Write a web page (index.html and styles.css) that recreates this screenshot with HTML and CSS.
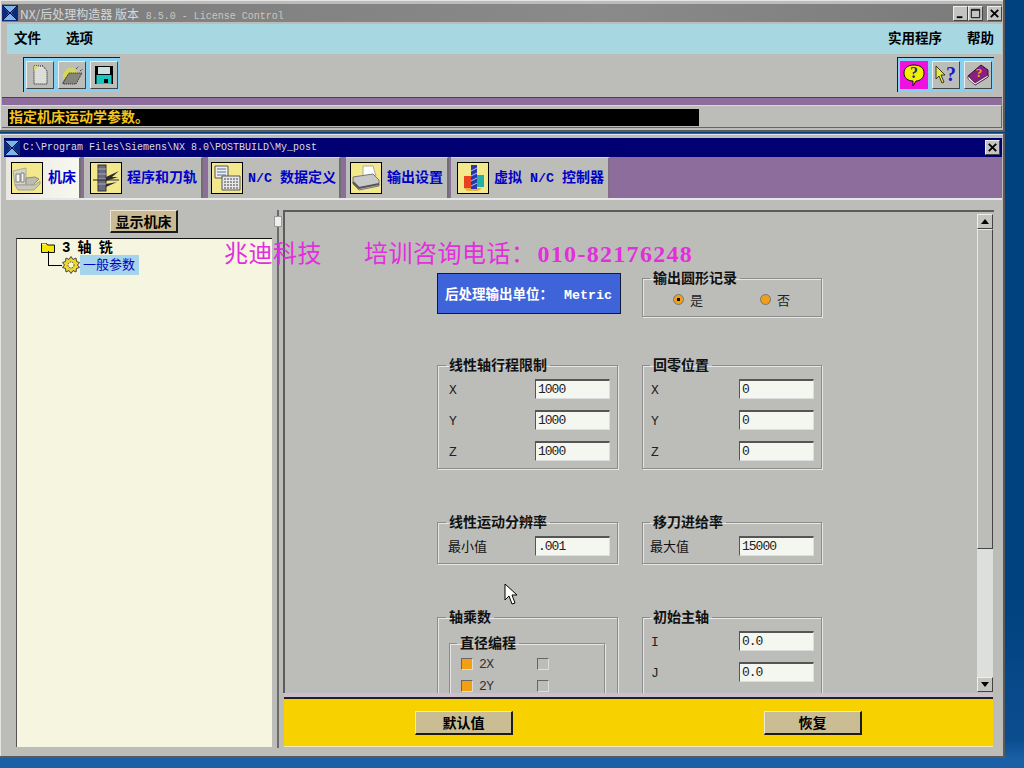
FILE: index.html
```html
<!DOCTYPE html>
<html lang="zh">
<head>
<meta charset="utf-8">
<title>NX/后处理构造器</title>
<link rel="stylesheet" href="styles.css">
</head>
<body>
<div class="desk">
  <section class="win win-top">
    <header class="title title-grey">
      <svg class="logo" viewBox="0 0 16 16"><rect width="16" height="16" fill="#0a2a80"/><path d="M1 1h14L9 8l6 7H1l6-7z" fill="#7fb4e8"/><path d="M1 1l7 7 7-7M1 15l7-7 7 7" stroke="#061040" fill="none"/></svg>
      <span class="title-text">NX/后处理构造器 版本 <span class="mono">8.5.0 - License Control</span></span>
      <div class="wbtns">
        <span class="wbtn"><svg viewBox="0 0 14 14"><rect x="3" y="10" width="6" height="2" fill="#000"/></svg></span>
        <span class="wbtn"><svg viewBox="0 0 14 14"><path d="M2.500 2.500h9v9h-9zM2.500 3.500h9" fill="none" stroke="#000"/></svg></span>
        <span class="wbtn wbtn-gap"><svg viewBox="0 0 14 14"><path d="M3 3l8 8M11 3l-8 8" stroke="#000" stroke-width="2"/></svg></span>
      </div>
    </header>
    <nav class="menu">
      <span class="menu-item">文件</span>
      <span class="menu-item">选项</span>
      <span class="spacer"></span>
      <span class="menu-item">实用程序</span>
      <span class="menu-item">帮助</span>
    </nav>
    <div class="toolbar">
      <div class="tgroup">
        <span class="tbtn"><svg viewBox="0 0 24 24"><path d="M6 3h9l4 5v13H6z" fill="#dcdcd8" stroke="#111" stroke-dasharray="1 1"/><path d="M6 3h5L6 8z" fill="#d8d870"/></svg></span>
        <span class="tbtn"><svg viewBox="0 0 24 24"><path d="M3 10l5-4h6l3 4 5 0-6 11H3z" fill="#85857c"/><path d="M3 10l5-5h6l4 5-9 0-6 8z" fill="#d4d860"/><path d="M3 20L9 10h13l-6 11H3z" fill="none" stroke="#222" stroke-dasharray="1 1"/><path d="M16 6l3-3M20 8l3-2" stroke="#222" stroke-dasharray="1 1"/></svg></span>
        <span class="tbtn"><svg viewBox="0 0 24 24"><path d="M3 3h18v18H3z" fill="#000"/><rect x="6" y="4" width="12" height="7" fill="#c8e0e0"/><rect x="4.500" y="12" width="15" height="9" fill="#18c8c0"/><rect x="12" y="16" width="4" height="4" fill="#000"/></svg></span>
      </div>
      <span class="spacer"></span>
      <div class="tgroup">
        <span class="tbtn tbtn-pink"><svg viewBox="0 0 24 24"><path d="M12 2c6 0 10 3 10 8s-4 8-8 8l-3 5v-5C6 18 2 15 2 10s4-8 10-8z" fill="#f0f000" stroke="#111"/><text x="12" y="15" text-anchor="middle" class="svg-q">?</text></svg></span>
        <span class="tbtn"><svg viewBox="0 0 24 24"><path d="M2 3l9 9-4 0 3 7-2 1-3-7-3 3z" fill="#e8e840" stroke="#111" stroke-width=".8"/><text x="17" y="18" text-anchor="middle" class="svg-q svg-q-blue">?</text></svg></span>
        <span class="tbtn"><svg viewBox="0 0 24 24"><path d="M2 13L15 2l7 5v7L9 22z" fill="#8a1f82" stroke="#301030"/><path d="M2 13l7 7 13-8v2L9 22l-7-6z" fill="#f0f0f0" stroke="#301030" stroke-width=".6"/><text x="13" y="14" text-anchor="middle" class="svg-q svg-q-gold">?</text></svg></span>
      </div>
    </div>
    <div class="stripe"></div>
    <div class="status">
      <div class="status-msg">指定机床运动学参数。</div>
    </div>
  </section>

  <section class="win win-main">
    <header class="title title-navy">
      <svg class="logo" viewBox="0 0 16 16"><rect width="16" height="16" fill="#0a2a80"/><path d="M1 1h14L9 8l6 7H1l6-7z" fill="#7fb4e8"/><path d="M1 1l7 7 7-7M1 15l7-7 7 7" stroke="#061040" fill="none"/></svg>
      <span class="title-path mono">C:\Program Files\Siemens\NX 8.0\POSTBUILD\My_post</span>
      <span class="wbtn wbtn-solo"><svg viewBox="0 0 14 14"><path d="M3 3l8 8M11 3l-8 8" stroke="#000" stroke-width="2"/></svg></span>
    </header>

    <div class="tabs">
      <div class="tab tab-active tab-1">
        <span class="tab-ico"><svg viewBox="0 0 30 30"><path d="M1 8l13-3v17H3z" fill="#d4d4cc" stroke="#a8a8a0"/><path d="M4 11h4v8H4zM9 10h3v9H9z" fill="#f4f4f0" stroke="#808078"/><path d="M14 15l9-1 4 2-6 6-7 1z" fill="#bcbcb0" stroke="#8c8c80"/><path d="M3 22h20l5-4v3l-6 6H6z" fill="#c8c8bc" stroke="#a0a094"/></svg></span>
        <span class="tab-label">机床</span>
      </div>
      <div class="tab tab-2">
        <span class="tab-ico"><svg viewBox="0 0 30 30"><rect x="7" y="2" width="8" height="26" fill="#6a6a80" stroke="#333"/><path d="M7 6h8M7 11h8M7 16h8M7 21h8" stroke="#a8a8c0"/><path d="M15 14l13-6-7 6h6l-12 4zM15 21l11-2-11 5z" fill="#2c2c2c"/><path d="M2 17h26" stroke="#222"/></svg></span>
        <span class="tab-label">程序和刀轨</span>
      </div>
      <div class="tab tab-3">
        <span class="tab-ico"><svg viewBox="0 0 30 30"><path d="M3 3h13v12H3z" fill="#eee" stroke="#555"/><path d="M5 6h9M5 9h9M5 12h9" stroke="#5070a0"/><path d="M10 13h18v14H10z" fill="#e8e8e8" stroke="#555"/><path d="M12 16h14M12 19h14M12 22h14M12 25h14" stroke="#404040" stroke-dasharray="2 1"/></svg></span>
        <span class="tab-label"><span class="mono-b">N/C </span>数据定义</span>
      </div>
      <div class="tab tab-4">
        <span class="tab-ico"><svg viewBox="0 0 30 30"><path d="M12 3h10l3 10H12z" fill="#fff" stroke="#aaa"/><path d="M2 14l20-3 6 6v6l-20 4-6-6z" fill="#c8c8c8" stroke="#777"/><path d="M2 19l6 6 20-4" fill="none" stroke="#555" stroke-width="2"/></svg></span>
        <span class="tab-label">输出设置</span>
      </div>
      <div class="tab tab-5">
        <span class="tab-ico"><svg viewBox="0 0 30 30"><path d="M6 13h10v12H6z" fill="#e84020"/><path d="M18 12h8v12h-8z" fill="#20b0a8"/><path d="M6 25h18l-4 3H9z" fill="#e8b040"/><rect x="13" y="2" width="6" height="24" fill="#2838a8"/><path d="M13 8l6-3M13 13l6-3M13 18l6-3M13 23l6-3" stroke="#b0c0f0"/></svg></span>
        <span class="tab-label">虚拟<span class="mono-b"> N/C </span>控制器</span>
      </div>
      <div class="tabs-rest"></div>
    </div>

    <div class="body">
      <aside class="left">
        <button class="btn btn-show" type="button">显示机床</button>
        <div class="tree">
          <div class="tree-root">
            <svg class="folder" viewBox="0 0 14 12"><path d="M.5 2.500h5l1 1.500h7v7.500H.5z" fill="#f4e800" stroke="#111"/><path d="M1 3h4" stroke="#fff"/></svg>
            <span class="tree-root-text"><span class="mono-k">3</span> 轴 铣</span>
          </div>
          <div class="tree-leaf">
            <span class="elbow"></span>
            <svg class="gear" viewBox="0 0 18 18"><path d="M9 .5l2 3 3-1.500.5 3.500 3 1-2 2.500 2 2.500-3 1-.5 3.500-3-1.500-2 3-2-3-3 1.500-.5-3.500-3-1 2-2.500-2-2.500 3-1 .5-3.500 3 1.500z" fill="#ecd830" stroke="#444"/><circle cx="9" cy="9" r="3" fill="#fff8c0" stroke="#444" stroke-dasharray="1.500 1"/></svg>
            <span class="tree-sel">一般参数</span>
          </div>
        </div>
      </aside>

      <div class="sash"><span class="sash-handle"></span></div>

      <div class="right">
        <div class="pane">
          <div class="scroll">
            <div class="form">
              <div class="row row-1">
                <div class="units">后处理输出单位：<span class="mono-w">Metric</span></div>
                <fieldset class="group group-r group-radio">
                  <legend>输出圆形记录</legend>
                  <div class="radios">
                    <label class="radio"><span class="dot dot-on"></span>是</label>
                    <label class="radio"><span class="dot"></span>否</label>
                  </div>
                </fieldset>
              </div>
              <div class="row row-2">
                <fieldset class="group">
                  <legend>线性轴行程限制</legend>
                  <div class="fld"><span>X</span><input class="inp" value="1000" readonly></div>
                  <div class="fld"><span>Y</span><input class="inp" value="1000" readonly></div>
                  <div class="fld"><span>Z</span><input class="inp" value="1000" readonly></div>
                </fieldset>
                <fieldset class="group group-r">
                  <legend>回零位置</legend>
                  <div class="fld"><span>X</span><input class="inp" value="0" readonly></div>
                  <div class="fld"><span>Y</span><input class="inp" value="0" readonly></div>
                  <div class="fld"><span>Z</span><input class="inp" value="0" readonly></div>
                </fieldset>
              </div>
              <div class="row row-3">
                <fieldset class="group">
                  <legend>线性运动分辨率</legend>
                  <div class="fld"><span class="cjk">最小值</span><input class="inp" value=".001" readonly></div>
                </fieldset>
                <fieldset class="group group-r">
                  <legend>移刀进给率</legend>
                  <div class="fld"><span class="cjk">最大值</span><input class="inp" value="15000" readonly></div>
                </fieldset>
              </div>
              <div class="row row-4">
                <fieldset class="group group-tall">
                  <legend>轴乘数</legend>
                  <fieldset class="group group-inner">
                    <legend>直径编程</legend>
                    <div class="chk-row"><span class="chk chk-on"></span><span class="chk-text">2X</span><span class="chk"></span></div>
                    <div class="chk-row"><span class="chk chk-on"></span><span class="chk-text">2Y</span><span class="chk"></span></div>
                  </fieldset>
                </fieldset>
                <fieldset class="group group-r group-tall">
                  <legend>初始主轴</legend>
                  <div class="fld"><span>I</span><input class="inp" value="0.0" readonly></div>
                  <div class="fld"><span>J</span><input class="inp" value="0.0" readonly></div>
                </fieldset>
              </div>
            </div>
          </div>
          <div class="vbar">
            <span class="vbtn"><i class="arrow-up"></i></span>
            <span class="thumb"></span>
            <span class="trough"></span>
            <span class="vbtn"><i class="arrow-down"></i></span>
          </div>
        </div>
        <div class="pane-gap"></div>
        <div class="actions">
          <button class="btn btn-act" type="button">默认值</button>
          <button class="btn btn-act" type="button">恢复</button>
        </div>
      </div>
    </div>
  </section>

  <div class="watermark"><span>兆迪科技</span><span>培训咨询电话：<b>010-82176248</b></span></div>
  <svg class="cursor" viewBox="0 0 14 24"><path d="M1 1v16l4-4 3 8 3-1-3-8h5z" fill="#fff" stroke="#000"/></svg>
</div>
</body>
</html>
```
FILE: styles.css
```css
* { box-sizing: border-box; }
html, body { margin: 0; padding: 0; }
body { width: 1024px; height: 768px; overflow: hidden; font-family: "Noto Sans CJK SC", sans-serif; }
.desk {
  position: relative; width: 1024px; height: 768px; overflow: hidden;
  background: linear-gradient(#00427f 0, #00427f 600px, #0b4e90 740px, #1b5fa6 760px, #1b5fa6 100%);
  display: flex; flex-direction: column; gap: 1px;
}
.spacer { flex: 1; }
.mono { font-family: "Liberation Mono", monospace; }
.mono-b { font-family: "Liberation Mono", monospace; font-weight: 700; white-space: pre; }
.mono-k { font-family: "Liberation Mono", monospace; font-weight: 700; }
.mono-w { font-family: "Liberation Mono", monospace; font-weight: 700; font-size: 13.300px; margin-left: 11px; }

.win {
  width: 1005px; background: #bcbdb9;
  border-right: 2px solid #5a5a5a; border-bottom: 2px solid #5a5a5a;
  display: flex; flex-direction: column;
  box-shadow: inset 1px 1px 0 #e4e4e4;
}
.win-top { height: 132px; padding: 4px 1px 0 2px; }
.win-main { height: 625px; padding: 4px 1px 0 5px; border-top: 1px solid #5a5a5a; }

.title { height: 18px; flex: none; display: flex; align-items: center; }
.title-grey { background: linear-gradient(90deg, #7c7c7c, #8a8a8a 60%, #7a7a7a); }
.title-navy { height: 19px; background: #000072; margin-left: -1px; }
.logo { width: 16px; height: 16px; flex: none; margin-right: 2px; }
.title-text { font-size: 12px; color: #d8d8d8; white-space: pre; }
.title-text .mono { font-size: 10px; color: #c8c8c0; letter-spacing: 0; margin-left: 4px; }
.title-path { font-size: 10px; color: #dcdcdc; letter-spacing: 0; margin-left: 1px; }
.wbtns { margin-left: auto; display: flex; padding-right: 0; }
.wbtn {
  width: 15px; height: 15px; display: block; background: #c4c4c0;
  border: 1px solid; border-color: #eee #444 #444 #eee;
}
.wbtn svg { display: block; width: 13px; height: 13px; }
.wbtn-gap { margin-left: 4px; }
.wbtn-solo { margin-left: auto; margin-right: 2px; }

.menu {
  height: 30px; flex: none; margin: 2px 0 0 5px; background: #a7d7e1;
  display: flex; align-items: center; padding: 0 8px 4px 7px; gap: 25px;
  font-size: 13.500px; font-weight: 700; color: #000;
}
.toolbar { height: 43px; flex: none; display: flex; align-items: flex-start; padding: 3px 8px 0 21px; }
.tgroup {
  display: flex; gap: 4px; padding: 3px 2px 3px 2px; height: 35px;
  background: #88d0f0; border: 1px solid #10203a; border-width: 1px 0 0 1px;
}
.tbtn {
  width: 28px; height: 28px; background: #bcbdb9; display: flex; align-items: center; justify-content: center;
  border: 1px solid; border-color: #eee #444 #444 #eee;
}
.tbtn svg { width: 24px; height: 24px; }
.tbtn-pink { background: #f010e0; border-color: #f010e0; }
.svg-q { font: 700 16px "Liberation Serif", serif; fill: #203080; }
.svg-q-blue { font-size: 20px; fill: #1818d0; }
.svg-q-gold { font-size: 13px; fill: #f0a020; }
.stripe { height: 8px; flex: none; background: #8c6d9c; border-top: 1px solid #444; }
.status {
  height: 23px; flex: none; padding: 3px 0 0 6px;
  border-top: 1px solid #d8d8d8; border-bottom: 1px solid #666; border-right: 1px solid #666;
}
.status-msg {
  width: 691px; height: 17px; background: #000; color: #f2c41e;
  font-size: 14px; font-weight: 700; line-height: 15px; padding-left: 1px; white-space: nowrap;
}

.tabs { height: 43px; flex: none; display: flex; align-items: stretch; background: #8c6d9c; margin-left: 1px; border-bottom: 2px solid #e8e8e8; }
.tab {
  display: flex; align-items: center; gap: 5px; background: #bcbdb9;
  border-right: 2px solid #707070; border-top: 1px solid #d8d8d8;
}
.tab-active { background: linear-gradient(90deg, #e8e8e0, #f8f8f0); }
.tab-1 { width: 75px; padding-left: 5px; margin-right: 3px; }
.tab-2 { width: 119px; padding-left: 6px; margin-right: 5px; }
.tab-3 { width: 133px; padding-left: 3px; margin-right: 5px; }
.tab-4 { width: 103px; padding-left: 4px; margin-right: 2px; }
.tab-5 { width: 159px; padding-left: 6px; border-right-color: #807088; }
.tabs-rest { flex: 1; }
.tab-ico { width: 32px; height: 32px; flex: none; background: #f4e88c; border: 1px solid #000; }
.tab-ico svg { width: 30px; height: 30px; display: block; }
.tab-label { color: #0000c8; font-size: 14px; font-weight: 700; white-space: pre; padding-bottom: 4px; }
.tab-label .mono-b { font-size: 13.300px; }

.body { flex: 1; min-height: 0; display: flex; padding-top: 10px; }
.left { width: 267px; flex: none; display: flex; flex-direction: column; padding-left: 11px; }
.btn {
  font-family: "Noto Sans CJK SC", sans-serif; font-size: 14px; font-weight: 700; color: #000; padding: 0;
  background: #c8bb94; border: 1px solid; border-color: #efe9d6 #1c1c1c #1c1c1c #efe9d6; border-width: 1px 2px 2px 1px;
}
.btn-show { width: 68px; height: 23px; margin-left: 94px; line-height: 16px; }
.tree {
  width: 256px; height: 509px; margin-top: 5px; background: #f6f6e0;
  border-top: 1px solid #111; border-left: 1px solid #555;
  padding: 1px 0 0 24px; position: relative; font-size: 14px; font-weight: 700;
}
.tree-root { display: flex; align-items: center; gap: 7px; height: 14px; }
.folder { width: 14px; height: 12px; }
.tree-root-text { white-space: pre; word-spacing: 4px; line-height: 14px; }
.tree-leaf { display: flex; align-items: center; height: 20px; margin-top: 1px; margin-left: 7px; }
.elbow { width: 14px; height: 15px; border-left: 1px solid #000; border-bottom: 1px solid #000; margin-top: -14px; flex: none; }
.gear { width: 18px; height: 18px; flex: none; }
.tree-sel { background: #a6d4ea; color: #0000c0; font-weight: 400; padding: 0 4px 0 3px; height: 20px; line-height: 18px; font-size: 13px; }

.sash { width: 11px; flex: none; display: flex; justify-content: center; position: relative; margin-bottom: 8px; }
.sash::before { content: ""; width: 2px; background: #6a6a6a; margin-left: 1px; }
.sash-handle { position: absolute; left: 2px; top: 6px; width: 8px; height: 11px; background: #eee; border: 1px solid #999; }

.right { flex: 1; min-width: 0; display: flex; flex-direction: column; margin-right: 8px; margin-bottom: 8px; }
.pane {
  height: 483px; flex: none; display: flex; overflow: hidden;
  border-top: 2px solid #5c5c5c; border-left: 2px solid #5c5c5c;
}
.scroll { flex: 1; min-width: 0; overflow: hidden; padding: 58px 0 0 152px; }
.form { width: 386px; display: flex; flex-direction: column; }
.row { display: flex; gap: 24px; align-items: flex-start; }
.row-1 { height: 87px; }
.row-2 { height: 157px; }
.row-3 { height: 95px; }
.row-4 { height: 120px; }

.units {
  width: 184px; height: 41px; margin-top: 3px; margin-right: -3px; flex: none; background: #3f63d9; color: #fff;
  border: 1px solid #10183a; font-size: 13.500px; font-weight: 700; line-height: 38px; padding-left: 7px; white-space: pre;
}
.group {
  width: 181px; margin: 0; padding: 6px 7px 0 11px; min-width: 0; flex: none;
  border: 1px solid #8c8c8c; box-shadow: 1px 1px 0 #e6e6e6, inset 1px 1px 0 #e6e6e6;
}
.group-r { width: 180px; padding-left: 8px; }
.group legend {
  font-size: 14px; font-weight: 700; line-height: 14px; height: 16px; padding: 0 3px; margin-left: -3px; color: #111;
}
.group-r legend { margin-left: -1px; }
.row-2 .group { height: 112px; }
.row-3 .group { height: 50px; }
.group-radio { height: 47px; }
.group-tall { height: 140px; }
.fld { display: flex; align-items: center; justify-content: space-between; height: 20px; margin-bottom: 11px; font: 13px "Liberation Mono", monospace; color: #222; }
.fld span { font-size: 13px; padding-top: 3px; }
.fld .cjk { font: 13px/18px "Noto Sans CJK SC", sans-serif; color: #111; margin-left: -1px; padding-top: 0; }
.inp {
  width: 75px; height: 20px; padding: 0 0 0 2px; font: 13px "Liberation Mono", monospace; letter-spacing: -1px; color: #222;
  background: #f4f6f0; border: 1px solid; border-color: #555 #ddd #ddd #555; border-width: 2px 1px 1px 1px; outline: none;
}
.radios { display: flex; padding-left: 22px; gap: 57px; }
.radio { display: flex; align-items: center; gap: 6px; font-size: 13px; line-height: 15px; color: #222; }
.dot { width: 11px; height: 11px; border-radius: 50%; background: #f0a018; border: 1px solid #777; display: block; }
.dot-on { background: radial-gradient(circle, #111 0 1.500px, #f0a018 2px); }
.group-inner { width: 156px; height: 80px; padding: 2px 0 0 11px; margin-top: 4px; }
.group .group-inner legend { margin-left: -4px; }
.chk-row { display: flex; align-items: center; height: 22px; font: 13px "Liberation Mono", monospace; letter-spacing: -.5px; color: #333; }
.chk { width: 12px; height: 12px; flex: none; border: 1px solid; border-color: #666 #ddd #ddd #666; }
.chk-on { background: #f0a012; }
.chk-text { width: 64px; padding-left: 6px; }

.vbar { width: 16px; flex: none; margin-right: 1px; display: flex; flex-direction: column; padding: 2px 0 1px; background: #bcbdb9; }
.vbtn { height: 15px; flex: none; display: flex; align-items: center; justify-content: center; background: #c4c4c0; border: 1px solid; border-color: #eee #444 #444 #eee; }
.arrow-up, .arrow-down { display: block; width: 0; height: 0; border-left: 4px solid transparent; border-right: 4px solid transparent; }
.arrow-up { border-bottom: 5px solid #000; }
.arrow-down { border-top: 5px solid #000; }
.thumb { height: 320px; flex: none; background: #bcbdb9; border: 1px solid; border-color: #e8e8e8 #444 #444 #e8e8e8; }
.trough { flex: 1; background: #dcdfdc; }
.pane-gap { height: 4px; flex: none; background: #cdbfce; margin-left: 1px; margin-right: 1px; }
.actions {
  height: 50px; flex: none; background: #f8d200; margin-left: 1px; margin-right: 1px;
  border-top: 2px solid #222; border-bottom: 1px solid #f0eeb0;
  display: flex; justify-content: flex-start; gap: 251px; padding: 12px 0 0 131px;
}
.btn-act { width: 98px; height: 24px; background: #cbbd93; line-height: 17px; }

.watermark {
  position: absolute; left: 224px; top: 237px; display: flex; gap: 42px; white-space: pre;
  font-size: 24px; line-height: 30px; color: #e22fdc; letter-spacing: .5px; font-family: "Noto Sans CJK SC", sans-serif;
}
.watermark b { font-family: "Liberation Serif", serif; font-weight: 700; font-size: 24px; letter-spacing: 1.300px; margin-left: 2px; }
.cursor { position: absolute; left: 504px; top: 583px; width: 14px; height: 24px; }
```
